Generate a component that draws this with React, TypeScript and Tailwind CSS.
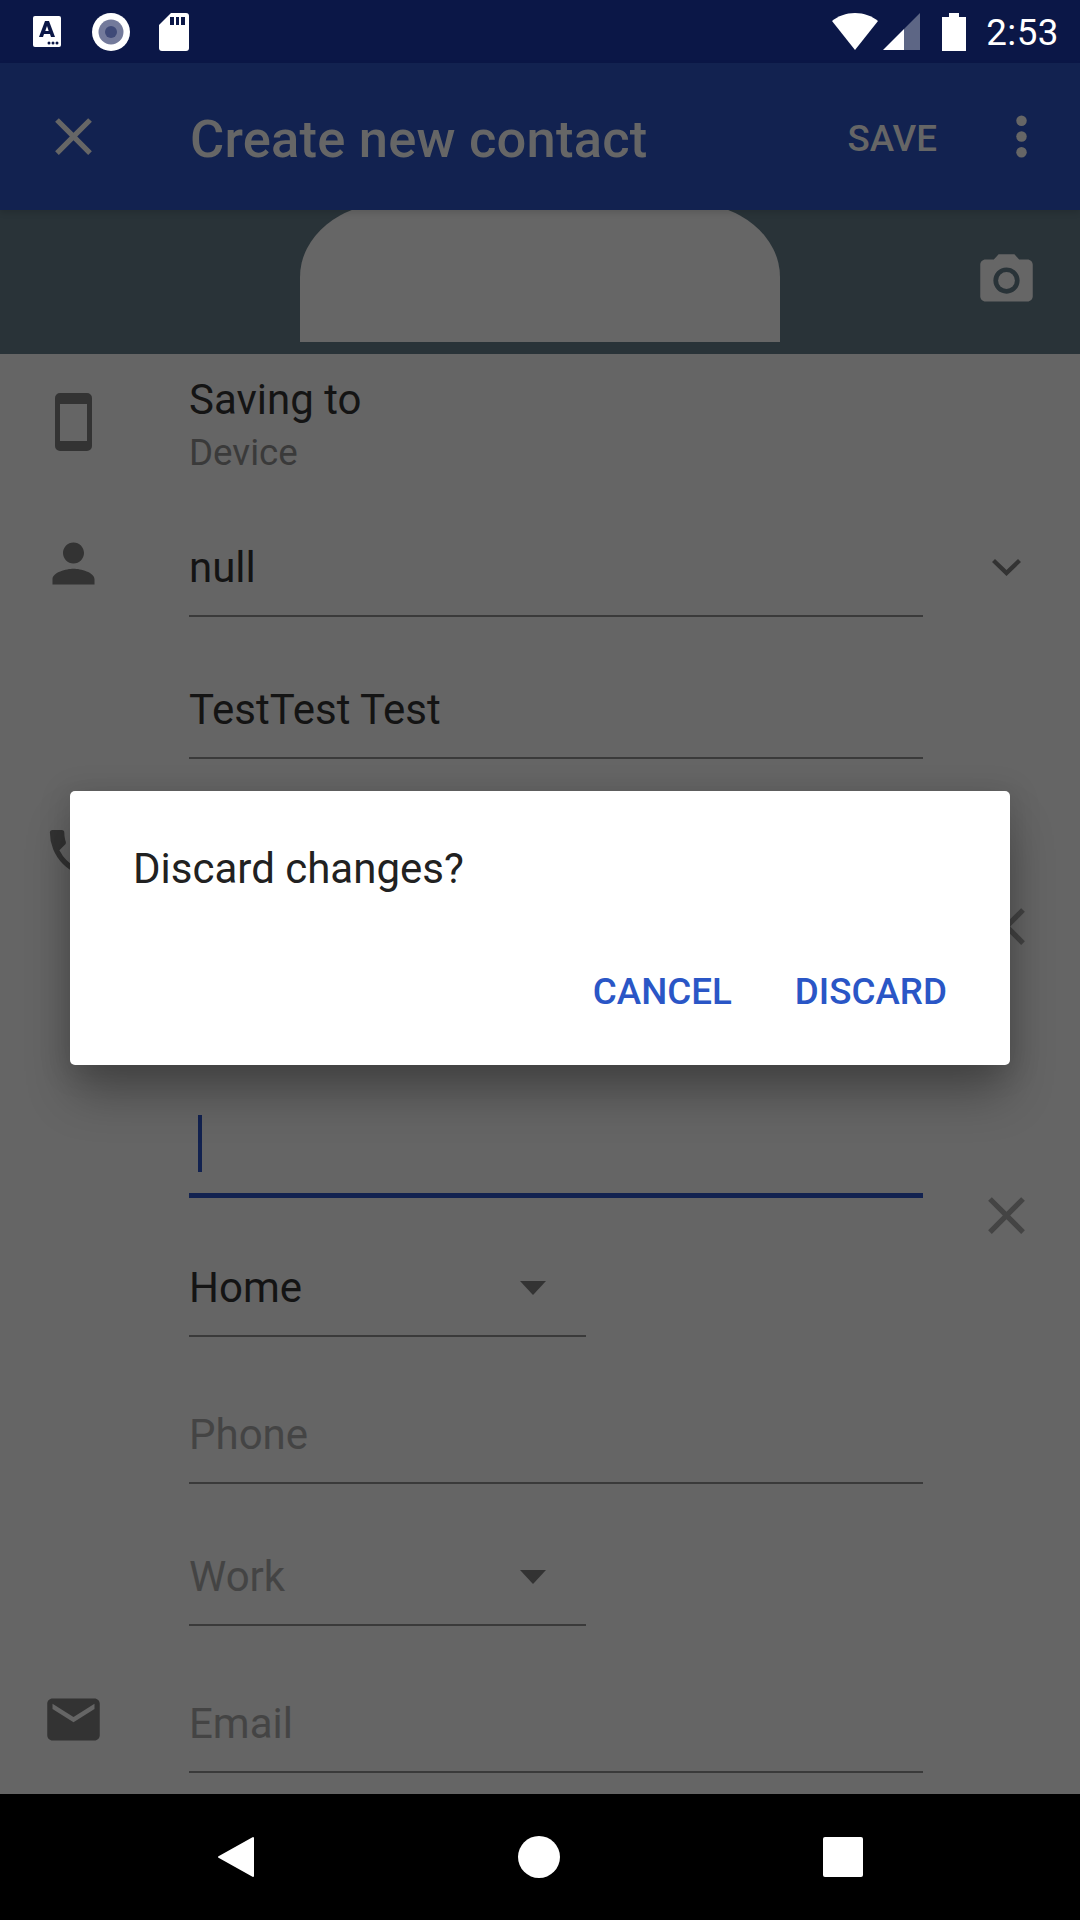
const font = "[font-family:Roboto,'Liberation_Sans',sans-serif]";

function CloseIcon({ className }: { className?: string }) {
  return (
    <svg viewBox="0 0 24 24" className={className} fill="currentColor">
      <path d="M19 6.41 17.59 5 12 10.59 6.41 5 5 6.41 10.59 12 5 17.59 6.41 19 12 13.41 17.59 19 19 17.59 13.41 12z" />
    </svg>
  );
}

function StatusBar() {
  return (
    <div className="flex h-[63px] shrink-0 items-center justify-between bg-[#0b1747] pl-[33px] pr-[21px]">
      <div className="flex items-center">
        <svg viewBox="0 0 28 31" className="h-[31px] w-[28px]">
          <rect width="28" height="31" rx="2" fill="#fff" />
          <path d="M6 21 12 5h4l6 16h-4l-1-3h-6l-1 3zM12.3 15h3.4L14 10z" fill="#0b1747" fillRule="evenodd" />
          <circle cx="16" cy="27" r="1.5" fill="#0b1747" />
          <circle cx="20" cy="27" r="1.5" fill="#0b1747" />
          <circle cx="24" cy="27" r="1.5" fill="#0b1747" />
        </svg>
        <svg viewBox="0 0 38 38" className="ml-[31px] h-[38px] w-[38px]">
          <circle cx="19" cy="19" r="19" fill="#fff" />
          <circle cx="19" cy="19" r="12.5" fill="#737a9b" />
          <circle cx="19" cy="19" r="6" fill="#3f4a78" />
        </svg>
        <svg viewBox="0 0 30 38" className="ml-[29px] h-[38px] w-[30px]">
          <path d="M12 0h15a3 3 0 0 1 3 3v32a3 3 0 0 1-3 3H3a3 3 0 0 1-3-3V12z" fill="#fff" />
          <path d="M11 4h4v8h-4zM17 4h3v8h-3zM22 4h4v8h-4z" fill="#0b1747" />
        </svg>
      </div>
      <div className="flex items-center">
        <svg viewBox="0 0 46 37" className="h-[37px] w-[46px]">
          <path d="M23 37 0 8C6 3 14 0 23 0s17 3 23 8z" fill="#fff" />
        </svg>
        <svg viewBox="0 0 37 37" className="ml-[5px] h-[37px] w-[37px]">
          <path d="M37 0v37H21V16z" fill="#5d6685" />
          <path d="M21 16v21H0z" fill="#fff" />
        </svg>
        <svg viewBox="0 0 24 38" className="ml-[22px] h-[38px] w-[24px]">
          <path d="M7 0h10v4h7v34H0V4h7z" fill="#fff" />
        </svg>
        <span className="ml-[20px] mt-[3px] text-[36.75px] leading-none tracking-[0.5px] text-white">2:53</span>
      </div>
    </div>
  );
}

function Toolbar() {
  return (
    <div className="relative z-10 flex h-[147px] shrink-0 items-center bg-[#122250] text-[#666666] shadow-[0_3px_6px_rgba(0,0,0,0.12)]">
      <div className="flex w-[147px] justify-center">
        <CloseIcon className="h-[63px] w-[63px]" />
      </div>
      <span className="ml-[43px] mt-[5px] flex-1 text-[52.5px] font-medium leading-none tracking-[0.2px]">Create new contact</span>
      <span className="mt-[5px] text-[36.75px] font-medium leading-none">SAVE</span>
      <svg viewBox="0 0 24 24" className="ml-[53px] mr-[27px] h-[63px] w-[63px]" fill="currentColor">
        <circle cx="12" cy="6" r="2" />
        <circle cx="12" cy="12" r="2" />
        <circle cx="12" cy="18" r="2" />
      </svg>
    </div>
  );
}

function Field({
  label,
  tone = 'text-[#141414]',
  width = 'w-[734px]',
  arrow,
}: {
  label: string;
  tone?: string;
  width?: string;
  arrow?: boolean;
}) {
  return (
    <div className={`${width} ml-[189px]`}>
      <div className="flex items-center justify-between pt-[1px]">
        <span className={`text-[42px] leading-[50px] ${tone}`}>{label}</span>
        {arrow && (
          <svg viewBox="0 0 26 14" className="mr-[40px] h-[14px] w-[26px]">
            <path d="M0 0h26L13 14z" fill="#333333" />
          </svg>
        )}
      </div>
      <div className="mt-[22px] h-[2px] w-full bg-[#3a3a3a]" />
    </div>
  );
}

export default function App() {
  return (
    <div className={`relative flex h-[1920px] w-[1080px] flex-col overflow-hidden bg-[#656565] ${font}`}>
      <StatusBar />
      <Toolbar />

      {/* avatar is cut off by the toolbar */}
      <div className="relative flex h-[144px] shrink-0 justify-center bg-[#293338]">
        <div className="h-[132px] w-[480px] overflow-hidden">
          <div className="-mt-[7px] h-[139px] w-full rounded-t-[90px_74px] bg-[#666666]" />
        </div>
        <svg viewBox="0 0 24 24" className="absolute right-[42px] top-[39px] h-[63px] w-[63px]" fill="#666666">
          <circle cx="12" cy="12" r="3.2" />
          <path d="M9 2 7.17 4H4c-1.1 0-2 .9-2 2v12c0 1.1.9 2 2 2h16c1.1 0 2-.9 2-2V6c0-1.1-.9-2-2-2h-3.17L15 2H9zm3 15c-2.76 0-5-2.24-5-5s2.24-5 5-5 5 2.24 5 5-2.24 5-5 5z" />
        </svg>
      </div>

      <div className="relative flex-1">
        <svg viewBox="0 0 37 58" className="absolute left-[55px] top-[39px] h-[58px] w-[37px]">
          <path d="M5 0h27a5 5 0 0 1 5 5v48a5 5 0 0 1-5 5H5a5 5 0 0 1-5-5V5a5 5 0 0 1 5-5zm0 11v37h27V11z" fill="#333333" fillRule="evenodd" />
        </svg>
        <svg viewBox="0 0 24 24" className="absolute left-[42px] top-[178px] h-[63px] w-[63px]" fill="#333333">
          <path d="M12 12c2.21 0 4-1.79 4-4s-1.79-4-4-4-4 1.79-4 4 1.79 4 4 4zm0 2c-2.67 0-8 1.34-8 4v2h16v-2c0-2.66-5.33-4-8-4z" />
        </svg>
        <svg viewBox="0 0 29 17" className="absolute left-[992px] top-[205px] h-[17px] w-[29px]">
          <path d="M3 0 14.5 11 26 0l3 3-14.5 14L0 3z" fill="#333333" />
        </svg>
        <svg viewBox="0 0 24 24" className="absolute left-[42px] top-[468px] h-[63px] w-[63px]" fill="#333333">
          <path d="M6.62 10.79a15.05 15.05 0 0 0 6.59 6.59l2.2-2.2a1 1 0 0 1 1.02-.24c1.12.37 2.33.57 3.57.57a1 1 0 0 1 1 1V20a1 1 0 0 1-1 1A17 17 0 0 1 3 4a1 1 0 0 1 1-1h3.5a1 1 0 0 1 1 1c0 1.25.2 2.45.57 3.57a1 1 0 0 1-.25 1.02z" />
        </svg>
        <CloseIcon className="absolute left-[975px] top-[541px] h-[63px] w-[63px] text-[#444444]" />
        <CloseIcon className="absolute left-[975px] top-[830px] h-[63px] w-[63px] text-[#444444]" />
        <svg viewBox="0 0 24 24" className="absolute left-[42px] top-[1334px] h-[63px] w-[63px]" fill="#333333">
          <path d="M20 4H4c-1.1 0-2 .9-2 2v12c0 1.1.9 2 2 2h16c1.1 0 2-.9 2-2V6c0-1.1-.9-2-2-2zm0 4-8 5-8-5V6l8 5 8-5v2z" />
        </svg>

        <div className="pt-[21px]">
          <div className="ml-[189px] text-[42px] leading-[50px] text-[#141414]">Saving to</div>
          <div className="ml-[189px] mt-[6px] text-[36.75px] leading-[44px] text-[#3a3a3a]">Device</div>
        </div>
        <div className="mt-[67px]">
          <Field label="null" />
        </div>
        <div className="mt-[67px]">
          <Field label="TestTest Test" />
        </div>
        <div className="relative mt-[434px]">
          <div className="absolute left-[198px] top-[-78px] h-[57px] w-[4px] bg-[#122250]" />
          <div className="ml-[189px] h-[5px] w-[734px] bg-[#122250]" />
        </div>
        <div className="mt-[64px]">
          <Field label="Home" width="w-[397px]" arrow />
        </div>
        <div className="mt-[72px]">
          <Field label="Phone" tone="text-[#444444]" />
        </div>
        <div className="mt-[67px]">
          <Field label="Work" tone="text-[#444444]" width="w-[397px]" arrow />
        </div>
        <div className="mt-[72px]">
          <Field label="Email" tone="text-[#444444]" />
        </div>
      </div>

      <div className="flex h-[126px] shrink-0 items-center justify-center bg-black">
        <svg viewBox="0 0 37 42" className="h-[42px] w-[37px]">
          <path d="M36 2v38L2 21z" fill="#fff" stroke="#fff" strokeWidth="2" strokeLinejoin="round" />
        </svg>
        <div className="ml-[264px] h-[42px] w-[42px] rounded-full bg-white" />
        <div className="ml-[263px] h-[40px] w-[40px] rounded-[2px] bg-white" />
      </div>

      <div className="absolute left-[70px] top-[791px] z-20 flex h-[274px] w-[940px] flex-col rounded-[5px] bg-white shadow-[0_32px_48px_-4px_rgba(0,0,0,0.3),0_4px_28px_6px_rgba(0,0,0,0.1)]">
        <div className="pl-[63px] pt-[53px] text-[42px] leading-[50px] text-[#212121]">Discard changes?</div>
        <div className="mt-auto flex justify-end gap-[63px] pb-[54px] pr-[63px] text-[36.75px] font-medium leading-none text-[#2a56c6]">
          <span>CANCEL</span>
          <span>DISCARD</span>
        </div>
      </div>
    </div>
  );
}
